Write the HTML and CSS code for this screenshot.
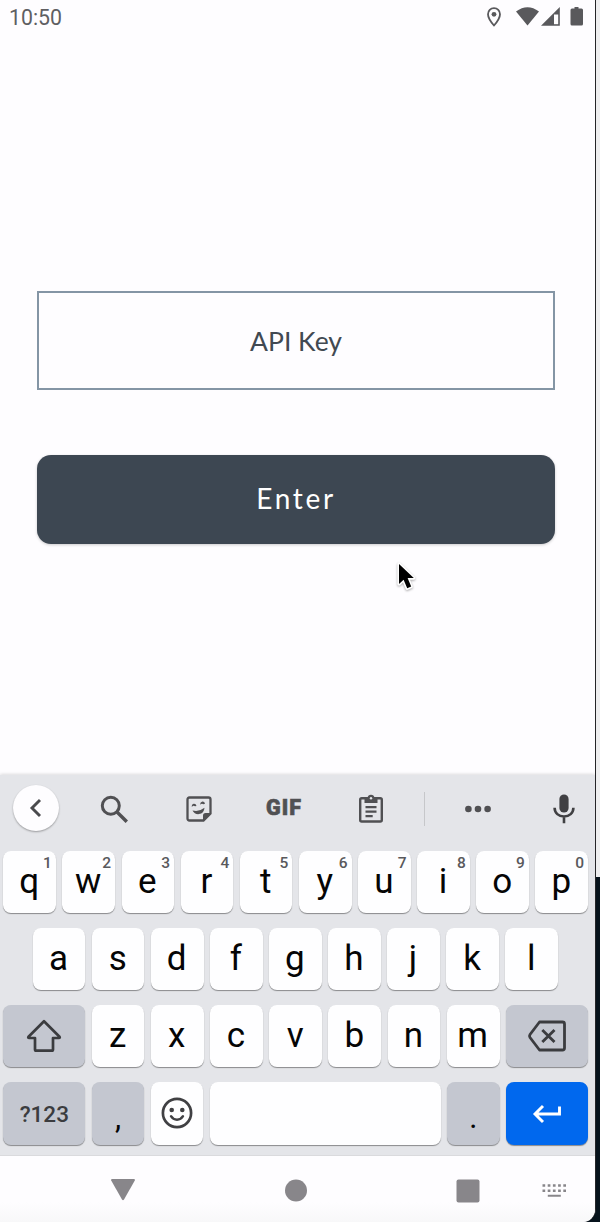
FILE: index.html
```html
<!DOCTYPE html>
<html lang="en">
<head>
<meta charset="utf-8">
<title>API Key</title>
<link rel="stylesheet" href="styles.css">
</head>
<body>
<div class="device">
  <header class="status">
    <span class="clock">10:50</span>
    <svg class="status-icons" width="104" height="24" viewBox="0 0 104 24" fill="#59595c">
      <path d="M14 3.200c-3.400 0-6 2.600-6 6 0 4.400 6 11.300 6 11.300s6-6.900 6-11.300c0-3.400-2.600-6-6-6z" fill="none" stroke="#59595c" stroke-width="1.800"/>
      <circle cx="14" cy="9.300" r="2.400"/>
      <path d="M36 6.500Q47.500-2 59 6.500L47.500 20.500z"/>
      <path d="M79.800 2v18.700H61z"/><path d="M74 9.500h4.200v9.700H74z" fill="#fefdff"/>
      <path d="M94.500 2h4v1.500h3q1.500 0 1.500 1.500v14q0 1.500-1.500 1.500h-9.500q-1.500 0-1.500-1.500V5q0-1.500 1.500-1.500h2.500z"/>
    </svg>
  </header>
  <main class="form">
    <div class="field">API Key</div>
    <button class="submit">Enter</button>
    <svg class="cursor" width="24" height="34" viewBox="0 0 24 34"><path d="M4 3v20l4.600-4.300 3.600 8.600 4-1.700-3.600-8.500h6.200z" fill="#000" stroke="#fff" stroke-width="3.200" paint-order="stroke" stroke-linejoin="round"/></svg>
  </main>
  <section class="keyboard">
    <div class="tools">
      <span class="back"><svg width="24" height="28" viewBox="0 0 24 28"><path d="M16 6L8 14l8 8" fill="none" stroke="#4a4a4d" stroke-width="2.900"/></svg></span>
      <svg width="30" height="30" viewBox="0 0 30 30" fill="none" stroke="#505053"><circle cx="11.800" cy="11.800" r="8.500" stroke-width="3"/><path d="M18 18l9.800 9.800" stroke-width="3.400"/></svg>
      <svg width="28" height="28" viewBox="0 0 28 28" fill="#505053"><path d="M4.500 2.500h19q2 0 2 2v14l-7 7h-14q-2 0-2-2v-19q0-2 2-2z" fill="none" stroke="#505053" stroke-width="2.300"/><path d="M18 26v-5.500q0-2.500 2.500-2.500H26z"/><path d="M7.500 15.500q6.500 1.700 12-2.700-.5 5.700-5.500 6.300-4.500.4-6.500-3.600z"/><path d="M6.800 12q-.3-3 2.200-3.200 2-.1 2.500 2.200l-1.500.3q-1.500-1.200-3.200.7zM15 9.800q.2-3 2.400-3.300 2.200-.1 2.600 2.300l-1.500.4q-1.800-1.300-3.500.6z"/></svg>
      <span class="gif">GIF</span>
      <svg width="26" height="30" viewBox="0 0 26 30" fill="#505053"><rect x="2.200" y="4.200" width="21.600" height="23.300" rx="1.500" fill="none" stroke="#505053" stroke-width="2.400"/><path d="M6.500 4h3Q10 .8 13 .8T16.500 4h3v5h-13z"/><circle cx="13" cy="4.200" r="1.200" fill="#e4e5e9"/><path d="M7.500 12h11v2.300h-11zm0 4.500h11v2.300h-11zm0 4.500h7.200v2.300H7.500z"/></svg>
      <span class="divider"></span>
      <svg width="28" height="8" viewBox="0 0 28 8" fill="#505053"><circle cx="4.400" cy="4" r="3.300"/><circle cx="14" cy="4" r="3.300"/><circle cx="23.600" cy="4" r="3.300"/></svg>
      <svg class="mic" width="24" height="32" viewBox="0 0 24 32"><rect x="7.400" y="1.500" width="9.200" height="18" rx="4.600" fill="#404043"/><path d="M2.600 14.800c0 5.300 4 8.700 9.400 8.700s9.400-3.400 9.400-8.700M12 23.500v6.800" fill="none" stroke="#404043" stroke-width="2.600"/></svg>
    </div>
    <div class="row">
      <span class="key">q<sup class="hint">1</sup></span><span class="key">w<sup class="hint">2</sup></span><span class="key">e<sup class="hint">3</sup></span><span class="key">r<sup class="hint">4</sup></span><span class="key">t<sup class="hint">5</sup></span><span class="key">y<sup class="hint">6</sup></span><span class="key">u<sup class="hint">7</sup></span><span class="key">i<sup class="hint">8</sup></span><span class="key">o<sup class="hint">9</sup></span><span class="key">p<sup class="hint">0</sup></span>
    </div>
    <div class="row home">
      <span class="key">a</span><span class="key">s</span><span class="key">d</span><span class="key">f</span><span class="key">g</span><span class="key">h</span><span class="key">j</span><span class="key">k</span><span class="key">l</span>
    </div>
    <div class="row">
      <span class="key wide grey icon"><svg width="36" height="34" viewBox="0 0 36 34"><path d="M18 2.200L2.500 17.700q-.8 1.300.7 1.300H9v11.500q0 1.200 1.200 1.200h15.600q1.200 0 1.200-1.200V19h5.800q1.500 0 .7-1.300z" fill="none" stroke="#3b3c3f" stroke-width="2.700" stroke-linejoin="round"/></svg></span>
      <span class="key">z</span><span class="key">x</span><span class="key">c</span><span class="key">v</span><span class="key">b</span><span class="key">n</span><span class="key">m</span>
      <span class="key wide grey icon"><svg width="40" height="32" viewBox="0 0 40 32" fill="none" stroke="#3b3c3f" stroke-width="2.800" stroke-linejoin="round"><path d="M12.500 2h23q2 0 2 2v24q0 2-2 2h-23L3 17.500q-1-1.500 0-3z"/><path d="M15.300 9.900l12.200 12.200m0-12.200l-12.200 12.200"/></svg></span>
    </div>
    <div class="row bottom">
      <span class="key wide grey mode">?123</span>
      <span class="key grey punct">,</span>
      <span class="key icon"><svg width="32" height="32" viewBox="0 0 32 32"><circle cx="16" cy="16" r="14.100" fill="none" stroke="#404043" stroke-width="2.700"/><circle cx="10.700" cy="13" r="2.300" fill="#404043"/><circle cx="21.300" cy="13" r="2.300" fill="#404043"/><path d="M10 19.200q2 3.500 6 3.500t6-3.500" fill="none" stroke="#404043" stroke-width="2.400" stroke-linecap="round"/></svg></span>
      <span class="key space"></span>
      <span class="key grey punct">.</span>
      <span class="key wide enter icon"><svg width="32" height="22" viewBox="0 0 32 22"><path d="M12 3L4 11l8 8M4 11h24.500V3.500" fill="none" stroke="#fff" stroke-width="2.900"/></svg></span>
    </div>
  </section>
  <nav class="nav">
    <svg width="28" height="24" viewBox="0 0 28 24"><path d="M3 0h22q1.500 0 .8 1.500L15 20.500q-1 1.500-2 0L2.200 1.500Q1.500 0 3 0z" fill="#88868a"/></svg>
    <svg width="24" height="24" viewBox="0 0 24 24"><circle cx="12" cy="11.500" r="11" fill="#88868a"/></svg>
    <svg width="24" height="24" viewBox="0 0 24 24"><rect x=".5" y=".5" width="23" height="23" rx="2" fill="#88868a"/></svg>
    <svg class="ime" width="24" height="14" viewBox="0 0 24 14" stroke="#88868a" stroke-width="2.400"><path d="M.5 1.500h23.500M.5 6.700h23.500" stroke-dasharray="2.700 2.500"/><path d="M5.800 11.800h13" stroke-width="2"/></svg>
  </nav>
</div>
</body>
</html>
```
FILE: styles.css
```css
* { box-sizing: border-box; }
body {
  margin: 0;
  height: 1222px;
  overflow: hidden;
  background: linear-gradient(#eeeeef 877px, #07131c 877px);
  font-family: Roboto, "Liberation Sans", sans-serif;
}
.device {
  display: flex;
  flex-direction: column;
  width: 596px;
  height: 1222px;
  background: #fefdff;
  border-right: 1px solid #252528;
  border-bottom-right-radius: 13px;
  overflow: hidden;
}
svg { display: block; flex: none; }
.status {
  display: flex;
  justify-content: space-between;
  height: 35px;
  padding: 5px 11px 0 9px;
}
.clock { font-size: 21.300px; line-height: 26px; color: #5f5f62; }
.form {
  position: relative;
  display: flex;
  flex-direction: column;
  gap: 64.500px;
  height: 740px;
  padding: 256px 40px 0 37px;
  font-family: Lato, sans-serif;
}
.field {
  height: 99px;
  border: 2px solid #8495a5;
  font-size: 26.500px;
  line-height: 96px;
  text-align: center;
  color: #414952;
}
.submit {
  height: 89px;
  padding: 0 0 3px;
  border: 0;
  border-radius: 14px;
  background: #3d4752;
  box-shadow: 0 1px 3px #0003;
  font: 28px/86px Lato, sans-serif;
  letter-spacing: 2.700px;
  color: #fff;
}
.cursor {
  position: absolute;
  left: 395px;
  top: 526px;
  filter: drop-shadow(0 1px 1px #0005);
}
.keyboard {
  height: 381px;
  background: #e4e5e9;
  border-bottom: 1px solid #dadadd;
  box-shadow: 0 -1px 3px #0002;
}
.tools {
  display: grid;
  grid-template-columns: 70px 87px 84px 86px 88px 19px 88px 73px;
  place-items: center;
  height: 67px;
  margin-bottom: 9px;
}
.back {
  display: grid;
  place-items: center;
  width: 46px;
  height: 46px;
  margin: 0 0 1px 1px;
  border-radius: 50%;
  background: #fefdff;
  box-shadow: 0 1px 2px #0005;
}
.gif {
  margin-bottom: 1px;
  font-size: 21.500px;
  font-weight: 900;
  line-height: 24px;
  letter-spacing: 1px;
  -webkit-text-stroke: .6px #505053;
  color: #505053;
}
.divider { width: 1px; height: 34px; background: #c6c7ca; }
.mic { margin-left: 11px; }
.row {
  display: flex;
  gap: 6.500px;
  height: 61.500px;
  margin-bottom: 15.500px;
  padding: 0 7px 0 3.300px;
}
.home { padding: 0 37px 0 32.800px; }
.key {
  position: relative;
  display: flex;
  flex: 1 1 0;
  align-items: center;
  justify-content: center;
  padding: 0 1px 0 0;
  border-radius: 8px;
  background: #fefeff;
  box-shadow: 0 1px 1px #0006;
  font-size: 35px;
  line-height: 40px;
  color: #050505;
}
.hint {
  position: absolute;
  top: 3px;
  right: 4px;
  font-size: 15.500px;
  font-weight: 500;
  line-height: 18px;
  color: #59595c;
}
.grey { background: #c4c7d0; }
.wide { flex: 0 0 82px; }
.icon { padding: 1px 0 0; }
.bottom { height: 63px; }
.bottom .key { flex: 0 0 52.500px; }
.bottom .wide { flex-basis: 82px; }
.bottom .space { flex: 1 1 0; }
.bottom .icon { padding: 0 0 1px; }
.bottom .enter { padding: 1px 1px 0 0; background: #0068ee; }
.bottom .mode { padding: 0; font-size: 22.500px; font-weight: 500; color: #3b3c3f; }
.bottom .punct { padding: 9px 0 0; font-size: 31px; }
.nav {
  display: flex;
  flex: 1;
  gap: 148px;
  align-items: center;
  padding: 3px 0 0 109px;
  background: linear-gradient(#fefdff 70%, #f8f8f9);
}
.nav svg:first-child { margin-right: -1.500px; }
.nav .ime { margin-left: -85.500px; }
```
